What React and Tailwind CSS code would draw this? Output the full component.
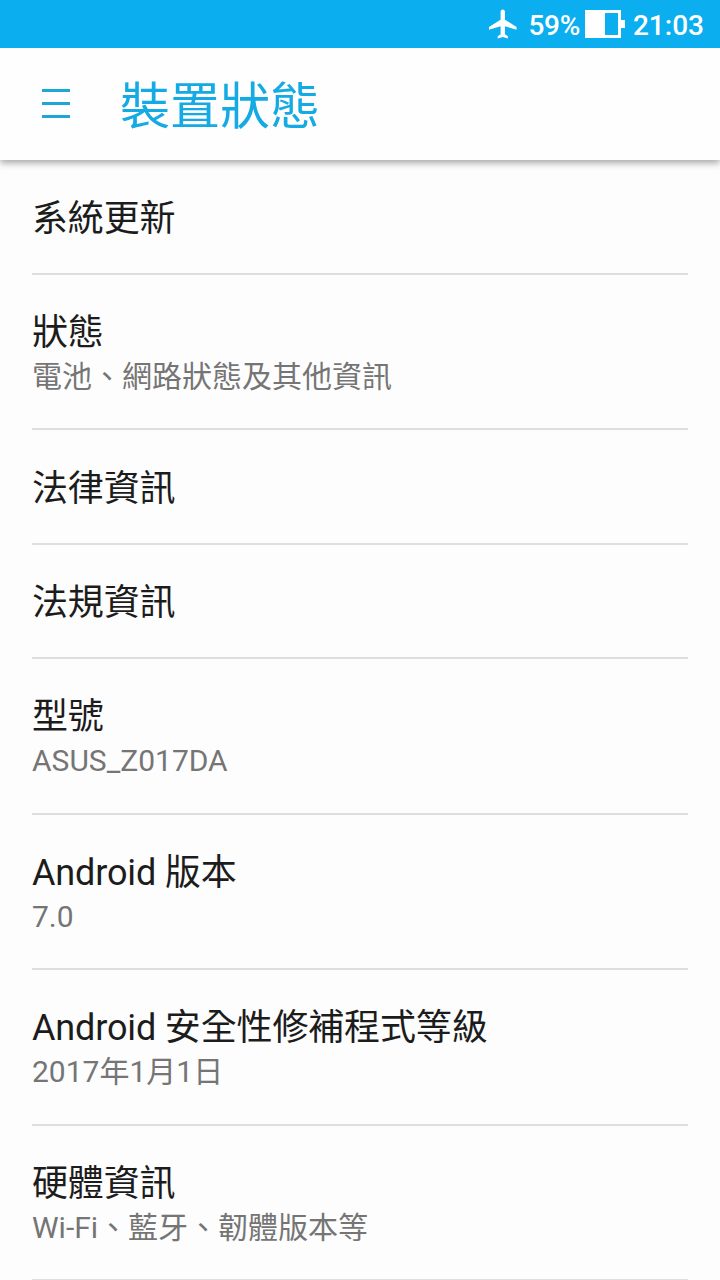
const items = [
  { title: "系統更新" },
  { title: "狀態", summary: "電池、網路狀態及其他資訊" },
  { title: "法律資訊" },
  { title: "法規資訊" },
  { title: "型號", summary: "ASUS_Z017DA" },
  { title: "Android 版本", summary: "7.0" },
  { title: "Android 安全性修補程式等級", summary: "2017年1月1日" },
  { title: "硬體資訊", summary: "Wi-Fi、藍牙、韌體版本等" },
];

function AirplaneIcon() {
  return (
    <svg viewBox="2 2 20 20" className="h-[30px] w-[29px]" fill="currentColor">
      <path d="M21 16v-2l-8-5V3.500c0-.83-.67-1.500-1.500-1.500S10 2.670 10 3.500V9l-8 5v2l8-2.500V19l-2 1.500V22l3.500-1 3.500 1v-1.500L13 19v-5.500l8 2.500z" />
    </svg>
  );
}

function BatteryIcon() {
  return (
    <svg viewBox="0 0 40 28" className="h-7 w-10">
      <path d="M0 0h36v10h4v8h-4v10H0z" fill="white" />
      <rect x="20" y="3" width="13" height="22" fill="#0baeee" />
    </svg>
  );
}

function StatusBar() {
  return (
    <div className="flex h-12 items-center justify-end bg-[#0baeee] pr-4 text-[28px] font-medium text-white">
      <AirplaneIcon />
      <span className="ml-2.5 pt-[3px] tracking-[-0.3px]">59%</span>
      <div className="ml-[5px]">
        <BatteryIcon />
      </div>
      <span className="ml-2 pt-[3px]">21:03</span>
    </div>
  );
}

function Header() {
  return (
    <header className="relative flex h-28 items-center bg-[#fefefe] pl-[42px] text-[#14aae3] shadow-[0_3px_7px_rgba(0,0,0,0.35)]">
      <button className="flex w-7 flex-col gap-2.5 pb-px" aria-label="Menu">
        <span className="h-[3px] bg-[#1fa6d8]" />
        <span className="h-[3px] bg-[#1fa6d8]" />
        <span className="h-[3px] bg-[#1fa6d8]" />
      </button>
      <h1 className="ml-[50px] pt-[5px] text-[50px] leading-none">裝置狀態</h1>
    </header>
  );
}

export default function App() {
  return (
    <div className="h-[1280px] w-[720px] overflow-hidden bg-[#fdfdfd] font-[Roboto,'Noto_Sans_CJK_TC',sans-serif]">
      <div className="relative z-10">
        <StatusBar />
      </div>
      <Header />
      <ul className="px-8">
        {items.map((item) => (
          <li
            key={item.title}
            className={`flex flex-col justify-center border-b-2 border-[#dedede] ${
              item.summary ? "h-[155.500px] pt-[3px]" : "h-[114.500px] pt-[5px]"
            }`}
          >
            <div className="text-[36px] leading-[48px] tracking-[-0.15px] text-[#1c1c1c]">{item.title}</div>
            {item.summary && (
              <div className="text-[30px] leading-[40px] text-[#757575]">{item.summary}</div>
            )}
          </li>
        ))}
      </ul>
    </div>
  );
}
